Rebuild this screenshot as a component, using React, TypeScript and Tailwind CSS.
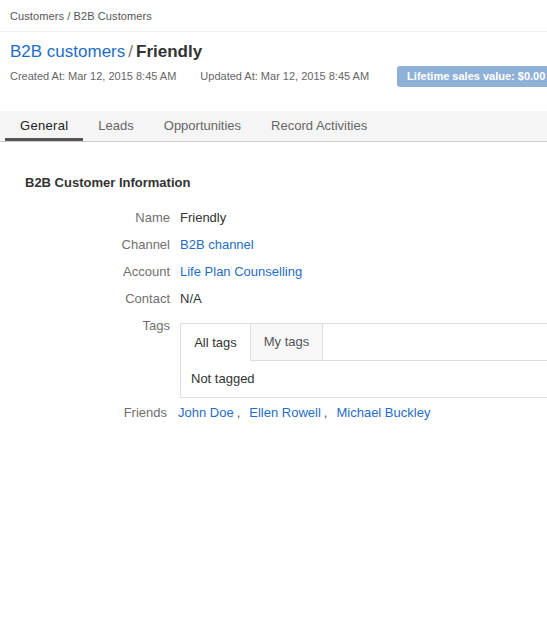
import React from "react";

const font = { fontFamily: '"Liberation Sans", Arial, sans-serif' };

function Row({ label, children }: { label: string; children: React.ReactNode }) {
  return (
    <div className="flex h-[27px] items-center">
      <div className="w-[170px] shrink-0 pr-[0px] text-right text-[#6f6f6f]">{label}</div>
      <div className="pl-[10px] text-[#333]">{children}</div>
    </div>
  );
}

export default function App() {
  return (
    <div className="min-h-[642px] w-[547px] overflow-hidden bg-white" style={font}>
      <div className="flex h-[32px] items-center border-b border-[#efefef] px-[10px] pt-[2px] text-[11px] tracking-[0.1px] text-[#555]">
        Customers / B2B Customers
      </div>
      <div className="px-[10px] pt-[10px]">
        <div className="flex h-[20px] items-center whitespace-nowrap text-[17px] leading-[20px]">
          <a className="text-[#1f6dc6]">B2B customers</a>
          <span className="mx-[3px] text-[#777]">/</span>
          <span className="font-bold text-[#333]">Friendly</span>
        </div>
        <div className="mt-[3px] flex h-[22px] items-center whitespace-nowrap text-[11px] text-[#666]">
          <span>Created At: Mar 12, 2015 8:45 AM</span>
          <span className="ml-[13px] mr-[11px] h-[15px] w-px bg-[#e3e3e3]"></span>
          <span>Updated At: Mar 12, 2015 8:45 AM</span>
          <span className="ml-[13px] mr-[15px] h-[22px] w-px bg-[#e3e3e3]"></span>
          <span className="flex h-[21px] shrink-0 items-center rounded-[3px] bg-[#8fb1d7] pl-[10px] pr-[10px] font-bold text-white">
            Lifetime sales value: $0.00
          </span>
        </div>
      </div>
      <div className="mt-[24px] flex h-[31px] border-b border-[#cccccc] bg-[#f5f5f5] pl-[5px] text-[13px]">
        <div className="flex items-center border-b-[3px] border-[#555] px-[15px] pt-[3px] tracking-[0.3px] text-[#222]">General</div>
        <div className="flex items-center px-[15px] text-[#666]">Leads</div>
        <div className="flex items-center px-[15px] text-[#666]">Opportunities</div>
        <div className="flex items-center px-[15px] text-[#666]">Record Activities</div>
      </div>
      <div className="pt-[33px] text-[13px]">
        <div className="pl-[25px] text-[13px] font-bold leading-[16px] text-[#333]">B2B Customer Information</div>
        <div className="mt-[13px]">
          <Row label="Name">Friendly</Row>
          <Row label="Channel"><a className="text-[#1f6dc6]">B2B channel</a></Row>
          <Row label="Account"><a className="text-[#1f6dc6]">Life Plan Counselling</a></Row>
          <Row label="Contact">N/A</Row>
          <div className="flex pt-[6px]">
            <div className="w-[170px] shrink-0 text-right leading-[15px] text-[#6f6f6f]">Tags</div>
            <div className="ml-[10px] mt-[5px] h-[75px] flex-1 border border-[#dddddd] border-r-0">
              <div className="flex h-[37px]">
                <div className="flex w-[69px] items-center justify-center bg-white text-[#333]">All tags</div>
                <div className="flex w-[73px] items-center justify-center border-b border-l border-r border-[#dddddd] bg-[#f8f8f8] text-[#555]">My tags</div>
                <div className="flex-1 border-b border-[#dddddd]"></div>
              </div>
              <div className="flex h-[36px] items-center px-[10px] text-[#333]">Not tagged</div>
            </div>
          </div>
          <div className="mt-[7px] flex h-[16px] items-center">
            <div className="w-[167px] shrink-0 text-right text-[#6f6f6f]">Friends</div>
            <div className="flex pl-[11px] text-[#1f6dc6]">
              <a>John Doe</a>
              <span className="ml-[3px] text-[#555]">,</span>
              <a className="ml-[9px]">Ellen Rowell</a>
              <span className="ml-[3px] text-[#555]">,</span>
              <a className="ml-[9px]">Michael Buckley</a>
            </div>
          </div>
        </div>
      </div>
    </div>
  );
}
